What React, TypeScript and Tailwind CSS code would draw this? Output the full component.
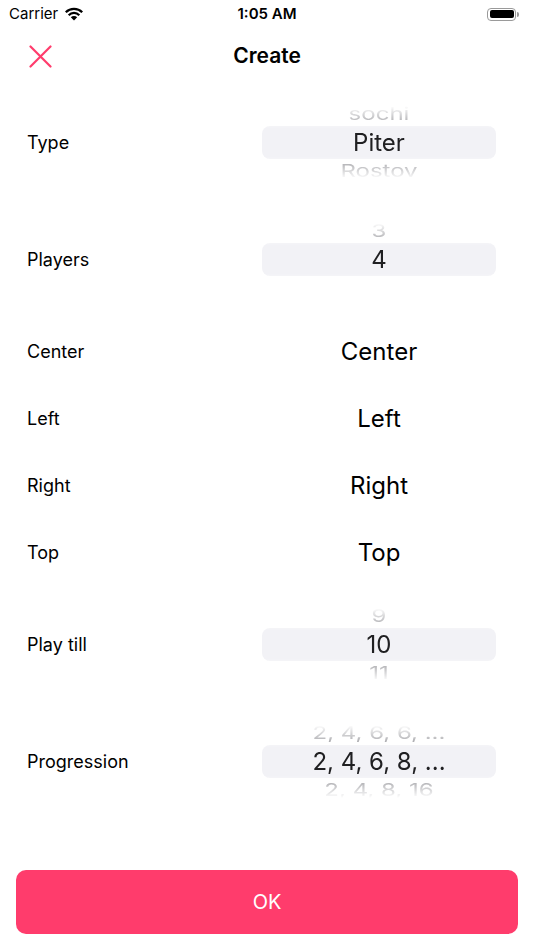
import React from "react";

type WheelProps = {
  prev?: string;
  value: string;
  next?: string;
};

// Wheel-style picker: the selected row sits in a grey pill, neighbours fade out above and below
function Wheel({ prev, value, next }: WheelProps) {
  return (
    <div className="relative h-[73px] w-full overflow-hidden [mask-image:linear-gradient(to_bottom,transparent_0%,black_32%,black_68%,transparent_100%)]">
      <div className="absolute inset-x-0 top-[20px] h-[33px] rounded-lg bg-[#f2f2f6]" />
      {prev && (
        <div className="absolute inset-x-0 top-[-7px] flex h-[30px] scale-y-[0.72] items-center justify-center text-[24px] text-[#8e8e93]">
          {prev}
        </div>
      )}
      <div className="absolute inset-x-0 top-[20px] flex h-[33px] items-center justify-center text-[24px] text-[#202022]">
        {value}
      </div>
      {next && (
        <div className="absolute inset-x-0 top-[50px] flex h-[30px] scale-y-[0.72] items-center justify-center text-[24px] text-[#8e8e93]">
          {next}
        </div>
      )}
    </div>
  );
}

function PickerRow({ label, ...wheel }: { label: string } & WheelProps) {
  return (
    <div className="flex h-[117px] items-center">
      <div className="flex-1 pl-[27px] text-[18px] text-black">{label}</div>
      <div className="mr-[38px] w-[234px]">
        <Wheel {...wheel} />
      </div>
    </div>
  );
}

function ValueRow({ label, value }: { label: string; value: string }) {
  return (
    <div className="flex h-[67px] items-center">
      <div className="flex-1 pl-[27px] text-[18px] text-black">{label}</div>
      <div className="mr-[38px] w-[234px] text-center text-[24px] text-black">{value}</div>
    </div>
  );
}

function StatusBar() {
  return (
    <div className="relative flex h-[28px] items-center px-[9px] text-[15px] text-black">
      <div className="flex items-center gap-[6px]">
        <span>Carrier</span>
        <svg width="20" height="14" viewBox="0 0 20 14">
          <path d="M10 13.5 L6.8 10.2 A4.6 4.6 0 0 1 13.2 10.2 Z" fill="black" />
          <path d="M3.9 7.4 A8.6 8.6 0 0 1 16.1 7.4 L14.5 9 A6.3 6.3 0 0 0 5.5 9 Z" fill="black" />
          <path d="M1 4.5 A12.8 12.8 0 0 1 19 4.5 L17.4 6.1 A10.5 10.5 0 0 0 2.6 6.1 Z" fill="black" />
        </svg>
      </div>
      <div className="absolute inset-x-0 text-center font-semibold">1:05 AM</div>
      <div className="ml-auto mr-[6px] flex items-center">
        <div className="flex h-[13px] w-[29px] items-center rounded-[4px] border border-[#9a9a9a] p-[1.5px]">
          <div className="h-full w-full rounded-[2px] bg-black" />
        </div>
        <div className="ml-[1px] h-[5px] w-[2px] rounded-r-sm bg-[#9a9a9a]" />
      </div>
    </div>
  );
}

export default function App() {
  return (
    <div className="flex h-screen w-full flex-col bg-white font-['Inter','Helvetica_Neue',sans-serif]">
      <StatusBar />

      {/* Navigation bar */}
      <div className="relative flex h-[56px] items-center">
        <button className="ml-[28px] flex h-[24px] w-[24px] items-center justify-center">
          <svg width="23" height="23" viewBox="0 0 23 23">
            <path d="M1.5 1.5 L21.5 21.5 M21.5 1.5 L1.5 21.5" stroke="#ff3c6c" strokeWidth="2.2" strokeLinecap="round" />
          </svg>
        </button>
        <div className="pointer-events-none absolute inset-x-0 text-center text-[21px] font-semibold text-black">
          Create
        </div>
      </div>

      <PickerRow label="Type" prev="sochi" value="Piter" next="Rostov" />
      <PickerRow label="Players" prev="3" value="4" />
      <ValueRow label="Center" value="Center" />
      <ValueRow label="Left" value="Left" />
      <ValueRow label="Right" value="Right" />
      <ValueRow label="Top" value="Top" />
      <PickerRow label="Play till" prev="9" value="10" next="11" />
      <PickerRow label="Progression" prev="2, 4, 6, 6, ..." value="2, 4, 6, 8, ..." next="2, 4, 8, 16" />

      <div className="flex-1" />
      <div className="px-4 pb-4">
        <button className="flex h-[64px] w-full items-center justify-center rounded-[10px] bg-[#ff3c6c] text-[20px] text-white">
          OK
        </button>
      </div>
    </div>
  );
}
